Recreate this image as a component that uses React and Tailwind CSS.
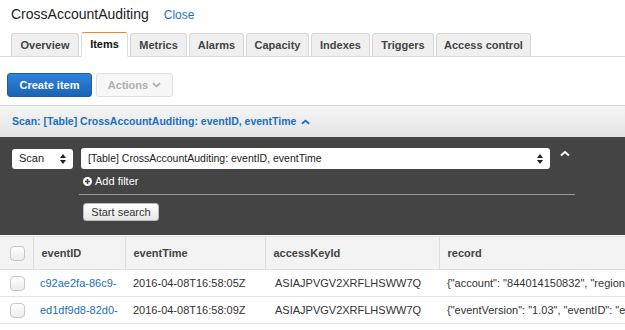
import { useState } from 'react';

const tabs = [
  { name: 'Overview', w: 'w-[68px]' },
  { name: 'Items', w: 'w-[47px]' },
  { name: 'Metrics', w: 'w-[57px]' },
  { name: 'Alarms', w: 'w-[55px]' },
  { name: 'Capacity', w: 'w-[63px]' },
  { name: 'Indexes', w: 'w-[59px]' },
  { name: 'Triggers', w: 'w-[62px]' },
  { name: 'Access control', w: 'w-[95px]' },
];

const rows = [
  {
    id: 'c92ae2fa-86c9-',
    time: '2016-04-08T16:58:05Z',
    key: 'ASIAJPVGV2XRFLHSWW7Q',
    record: '{"account": "844014150832", "region": "us-east-1"}',
  },
  {
    id: 'ed1df9d8-82d0-',
    time: '2016-04-08T16:58:09Z',
    key: 'ASIAJPVGV2XRFLHSWW7Q',
    record: '{"eventVersion": "1.03", "eventID": "ed1df9d8"}',
  },
];

function Caret({ className }) {
  return (
    <svg viewBox="0 0 10 6" className={className} fill="none" stroke="currentColor" strokeWidth="2">
      <path d="M1 5 L5 1.5 L9 5" />
    </svg>
  );
}

function UpDown() {
  return (
    <svg viewBox="0 0 6 10" className="w-[6px] h-[10px]" fill="#222">
      <path d="M3 0 L6 4 L0 4 Z" />
      <path d="M3 10 L6 6 L0 6 Z" />
    </svg>
  );
}

function Checkbox() {
  return (
    <div className="w-[15px] h-[15px] rounded-[4px] border border-[#c8c8c8] bg-gradient-to-b from-white to-[#ececec]" />
  );
}

export default function App() {
  const [active, setActive] = useState('Items');

  return (
    <div className="w-[625px] h-[330px] overflow-hidden bg-white font-['Liberation_Sans',Arial,sans-serif] text-[#333]">
      {/* Titre */}
      <div className="flex items-baseline gap-[15px] pl-[11px] pt-[4px] h-[33px]">
        <span className="text-[14px] text-[#222]">CrossAccountAuditing</span>
        <span className="text-[12px] text-[#1a73c6]">Close</span>
      </div>

      {/* Onglets */}
      <div className="flex items-end gap-[2px] pl-[11px] h-[24px] border-b border-[#dcdcdc]">
        {tabs.map(t => (
          <button
            key={t.name}
            onClick={() => setActive(t.name)}
            className={
              t.name === active
                ? `${t.w} h-[25px] -mb-px bg-white border border-[#ddd] border-b-white border-t-[#f0852a] rounded-t-[3px] text-[11px] font-bold text-[#111]`
                : `${t.w} h-[23px] bg-[#efefef] border border-[#d6d6d6] border-b-0 rounded-t-[3px] text-[11px] font-bold text-[#444]`
            }
          >
            {t.name}
          </button>
        ))}
      </div>

      {/* Boutons */}
      <div className="flex items-start gap-[4px] pl-[7px] pt-[16px] h-[48px]">
        <button className="w-[85px] h-[24px] rounded-[3px] bg-gradient-to-b from-[#2f84dc] to-[#1a63b5] border border-[#1a5ea8] text-white text-[11px] font-bold">
          Create item
        </button>
        <button className="w-[77px] h-[24px] rounded-[3px] bg-[#f7f7f7] border border-[#e0e0e0] text-[#b0b0b0] text-[11px] font-bold flex items-center justify-center gap-[4px]">
          Actions
          <svg viewBox="0 0 10 6" className="w-[9px] h-[6px]" fill="none" stroke="currentColor" strokeWidth="2">
            <path d="M1 1 L5 4.5 L9 1" />
          </svg>
        </button>
      </div>

      {/* Barre Scan */}
      <div className="h-[32px] border-t border-[#d8d8d8] bg-gradient-to-b from-[#f5f5f5] to-[#e4e4e4] flex items-center pl-[12px] gap-[5px] text-[#1a6fc0] text-[10.5px] font-bold">
        Scan: [Table] CrossAccountAuditing: eventID, eventTime
        <Caret className="w-[9px] h-[6px]" />
      </div>

      {/* Panneau sombre */}
      <div className="bg-[#444] h-[98px] pt-[11px]">
        <div className="flex items-center">
          <div className="ml-[12px] w-[61px] h-[20px] bg-white rounded-[3px] flex items-center justify-between px-[7px] text-[11px] text-[#222]">
            Scan
            <UpDown />
          </div>
          <div className="ml-[8px] w-[469px] h-[21px] bg-white rounded-[3px] flex items-center justify-between px-[7px] text-[10.5px] text-[#222]">
            [Table] CrossAccountAuditing: eventID, eventTime
            <UpDown />
          </div>
          <Caret className="ml-[10px] -mt-[10px] w-[10px] h-[7px] text-white" />
        </div>
        <div className="ml-[79px] w-[496px] border-b border-[#9a9a9a] h-[26px] flex items-center pl-[4px] gap-[3px] text-white text-[11px]">
          <svg viewBox="0 0 10 10" className="w-[9px] h-[9px]">
            <circle cx="5" cy="5" r="5" fill="white" />
            <path d="M5 2.2 V7.8 M2.2 5 H7.8" stroke="#444" strokeWidth="1.8" />
          </svg>
          Add filter
        </div>
        <button className="ml-[83px] mt-[8px] w-[76px] h-[18px] rounded-[3px] bg-gradient-to-b from-white to-[#e6e6e6] border border-[#bbb] text-[11px] text-[#333]">
          Start search
        </button>
      </div>

      {/* Tableau */}
      <table className="mt-[1px] border-collapse text-[11px] table-fixed w-[720px]">
        <colgroup>
          <col className="w-[33px]" />
          <col className="w-[92px]" />
          <col className="w-[140px]" />
          <col className="w-[174px]" />
          <col className="w-[281px]" />
        </colgroup>
        <thead>
          <tr className="h-[33px] bg-[#f3f3f3] border-y border-[#dedede]">
            <th className="pl-[10px] border-r border-[#dedede]"><Checkbox /></th>
            {['eventID', 'eventTime', 'accessKeyId', 'record'].map(h => (
              <th key={h} className="text-left pl-[8px] font-bold text-[#444] border-r border-[#dedede]">{h}</th>
            ))}
          </tr>
        </thead>
        <tbody>
          {rows.map(r => (
            <tr key={r.id} className="h-[27px] border-b border-[#e4e4e4]">
              <td className="pl-[10px]"><Checkbox /></td>
              <td className="pl-[7px] text-[#1a6fc0] whitespace-nowrap overflow-hidden">{r.id}</td>
              <td className="pl-[8px] text-[#333] whitespace-nowrap">{r.time}</td>
              <td className="pl-[10px] text-[#333] whitespace-nowrap">{r.key}</td>
              <td className="pl-[8px] text-[#333] whitespace-nowrap overflow-hidden">{r.record}</td>
            </tr>
          ))}
        </tbody>
      </table>
    </div>
  );
}
